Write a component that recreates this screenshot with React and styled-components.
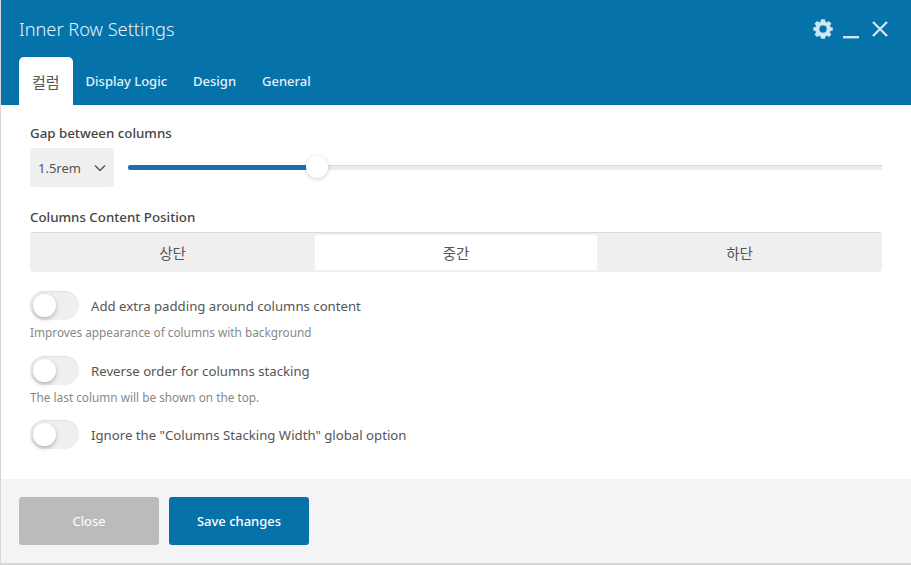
import React from "react";
import styled, { createGlobalStyle } from "styled-components";

const Global = createGlobalStyle`
  html, body {
    margin: 0;
    padding: 0;
    background: #d6d6d6;
    overflow: hidden;
  }
  * { box-sizing: border-box; }
`;

const Modal = styled.div`
  width: 910px;
  height: 563px;
  margin-left: 1px;
  display: flex;
  flex-direction: column;
  background: #fff;
  font-family: "Noto Sans", "Noto Sans CJK KR", sans-serif;
  color: #444;
`;

const Header = styled.header`
  height: 105px;
  flex: none;
  background: #0573aa;
  padding: 0 18px;
  display: flex;
  flex-direction: column;
`;

const TitleRow = styled.div`
  height: 57px;
  display: flex;
  align-items: center;
  justify-content: space-between;
`;

const Title = styled.h1`
  margin: 0;
  font-size: 18.2px;
  font-weight: 300;
  color: #e4f2fa;
`;

const Actions = styled.div`
  display: flex;
  align-items: center;
  gap: 10px;
  margin-right: 5px;
  color: #cfe6f3;
`;

const IconSvg = styled.svg`
  display: block;
`;

const Tabs = styled.nav`
  display: flex;
  height: 48px;
`;

const Tab = styled.div`
  height: 48px;
  padding: 0 13px;
  display: flex;
  align-items: center;
  border-radius: 5px 5px 0 0;
  font-size: 13px;
  font-weight: 500;
  background: ${(p) => (p.$active ? "#fff" : "transparent")};
  color: ${(p) => (p.$active ? "#555" : "#e3f1f9")};
  ${(p) => p.$active && "font-weight: 400; font-size: 15px;"}
`;

const Body = styled.main`
  flex: 1;
  padding: 20px 29px 0 29px;
`;

const Label = styled.div`
  font-size: 13.3px;
  line-height: 16px;
  font-weight: 500;
  color: #444;
`;

const GapRow = styled.div`
  display: flex;
  align-items: center;
  gap: 14px;
  margin-top: 7px;
`;

const Select = styled.div`
  width: 84px;
  height: 39px;
  flex: none;
  padding: 0 8px;
  display: flex;
  align-items: center;
  justify-content: space-between;
  background: #efefef;
  border-radius: 4px;
  font-size: 13px;
  color: #555;
`;

const Slider = styled.div`
  flex: 1;
  height: 5px;
  position: relative;
  background: #ececec;
  border-top: 1px solid #d8d8d8;
`;

const SliderFill = styled.div`
  height: 5px;
  margin-top: -1px;
  background: #1e6eaf;
  border-radius: 3px;
`;

const SliderThumb = styled.div`
  position: absolute;
  top: -10px;
  width: 22px;
  height: 22px;
  border-radius: 50%;
  background: #fff;
  box-shadow: 0 1px 4px rgba(0, 0, 0, 0.2);
`;

const PositionLabel = styled(Label)`
  margin-top: 22px;
`;

const Segments = styled.div`
  display: flex;
  height: 40px;
  margin-top: 7px;
  padding: 2px 0;
  background: #efefef;
  border-top: 1px solid #d8d8d8;
  border-radius: 4px;
`;

const Segment = styled.div`
  flex: ${(p) => (p.$active ? "0 0 282px" : "1")};
  display: flex;
  align-items: center;
  justify-content: center;
  font-size: 14.5px;
  color: #555;
  background: ${(p) => (p.$active ? "#fff" : "transparent")};
`;

const Option = styled.div`
  display: flex;
  align-items: center;
  gap: 12px;
  margin-top: ${(p) => p.$top}px;
`;

const Toggle = styled.div`
  width: 49px;
  height: 29px;
  flex: none;
  position: relative;
  border-radius: 15px;
  background: #efefef;
  border-top: 1px solid #e0e0e0;
`;

const Knob = styled.div`
  position: absolute;
  top: 2px;
  left: 3px;
  width: 23px;
  height: 23px;
  border-radius: 50%;
  background: #fff;
  box-shadow: 0 2px 4px rgba(0, 0, 0, 0.25);
`;

const OptionText = styled.span`
  font-size: 13.2px;
  line-height: 18px;
  color: #555;
`;

const Hint = styled.div`
  margin-top: 4px;
  font-size: 11.8px;
  line-height: 16px;
  color: #888;
`;

const Footer = styled.footer`
  height: 84px;
  flex: none;
  padding: 18px;
  display: flex;
  gap: 10px;
  background: #f4f4f4;
`;

const Button = styled.div`
  width: 140px;
  height: 48px;
  display: flex;
  align-items: center;
  justify-content: center;
  border-radius: 3px;
  font-size: 13px;
  background: ${(p) => (p.$primary ? "#0573aa" : "#bbbbbb")};
  color: #fff;
  font-weight: ${(p) => (p.$primary ? 500 : 400)};
`;

const Gear = () => (
  <IconSvg width="20" height="20" viewBox="0 0 20 20">
    <path
      fill="currentColor"
      stroke="currentColor"
      strokeWidth="0.5"
      strokeLinejoin="round"
      fillRule="evenodd"
      d="M8.2 0.6h3.6l.5 2.3 1.6.7 2.1-1.3 2.1 2.4-1.4 2 .6 1.6 2.3.4v2.6l-2.3.5-.6 1.6 1.4 2-2.1 2.4-2.1-1.3-1.6.7-.5 2.3H8.2l-.5-2.3-1.6-.7-2.1 1.3-2.1-2.4 1.4-2-.6-1.6-2.3-.5V8.7l2.3-.4.6-1.6-1.4-2 2.1-2.4 2.1 1.3 1.6-.7zM10 6a4 4 0 1 0 0 8 4 4 0 0 0 0-8z"
    />
  </IconSvg>
);

const Minimize = () => (
  <IconSvg width="16" height="20" viewBox="0 0 16 20">
    <rect x="0" y="17" width="16" height="2.4" fill="currentColor" />
  </IconSvg>
);

const Cross = () => (
  <IconSvg width="19" height="16" viewBox="-3 0 19 16">
    <path d="M1 1l14 14M15 1L1 15" stroke="currentColor" strokeWidth="2.4" fill="none" />
  </IconSvg>
);

const Chevron = () => (
  <IconSvg width="12" height="8" viewBox="0 0 12 8">
    <path d="M1 1.5l5 5 5-5" stroke="#555" strokeWidth="1.5" fill="none" />
  </IconSvg>
);

export default function App() {
  return (
    <>
      <Global />
      <Modal>
        <Header>
          <TitleRow>
            <Title>Inner Row Settings</Title>
            <Actions>
              <Gear />
              <Minimize />
              <Cross />
            </Actions>
          </TitleRow>
          <Tabs>
            <Tab $active>컬럼</Tab>
            <Tab>Display Logic</Tab>
            <Tab>Design</Tab>
            <Tab>General</Tab>
          </Tabs>
        </Header>
        <Body>
          <Label>Gap between columns</Label>
          <GapRow>
            <Select>
              1.5rem
              <Chevron />
            </Select>
            <Slider>
              <SliderFill style={{ width: "25%" }} />
              <SliderThumb style={{ left: "178px" }} />
            </Slider>
          </GapRow>
          <PositionLabel>Columns Content Position</PositionLabel>
          <Segments>
            <Segment>상단</Segment>
            <Segment $active>중간</Segment>
            <Segment>하단</Segment>
          </Segments>
          <Option $top={19}>
            <Toggle>
              <Knob />
            </Toggle>
            <OptionText>Add extra padding around columns content</OptionText>
          </Option>
          <Hint>Improves appearance of columns with background</Hint>
          <Option $top={16}>
            <Toggle>
              <Knob />
            </Toggle>
            <OptionText>Reverse order for columns stacking</OptionText>
          </Option>
          <Hint>The last column will be shown on the top.</Hint>
          <Option $top={15}>
            <Toggle>
              <Knob />
            </Toggle>
            <OptionText>Ignore the "Columns Stacking Width" global option</OptionText>
          </Option>
        </Body>
        <Footer>
          <Button>Close</Button>
          <Button $primary>Save changes</Button>
        </Footer>
      </Modal>
    </>
  );
}
